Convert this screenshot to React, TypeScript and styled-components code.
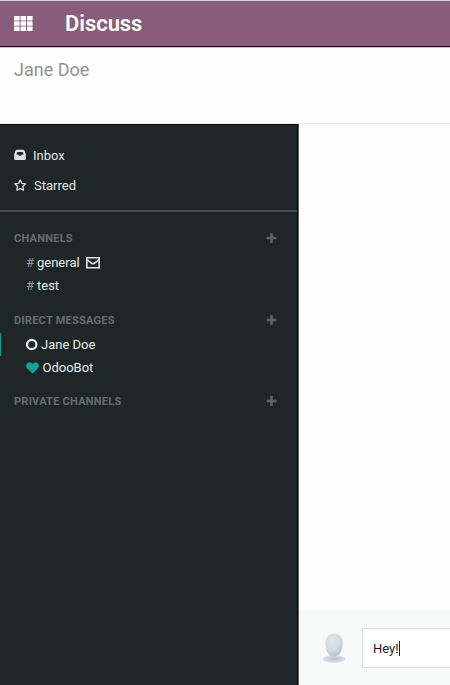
import React from 'react';
import styled, { createGlobalStyle } from 'styled-components';

const GlobalStyle = createGlobalStyle`
  * { box-sizing: border-box; }
  body { margin: 0; background: #fff; font-family: Roboto, "Liberation Sans", sans-serif; font-size: 13px; }
`;

const Page = styled.div`
  display: flex;
  flex-direction: column;
  width: 450px;
  height: 685px;
  overflow: hidden;
  background: #fefefe;
`;

const Navbar = styled.header`
  display: flex;
  align-items: center;
  flex: 0 0 48px;
  padding-left: 14px;
  background: #885d7a;
  border-top: 1px solid #d3d0d2;
  border-bottom: 1px solid #e3b1d8;
  box-shadow: inset 0 -1px #1e0718;
`;

const Brand = styled.h1`
  margin: 0 0 0 32px;
  color: #fff;
  font-size: 22px;
  font-weight: 600;
  line-height: 26px;
  letter-spacing: -0.05px;
`;

const ControlPanel = styled.div`
  flex: 0 0 76px;
  padding: 11px 14px;
  border-bottom: 1px solid #ececec;
  color: #929292;
  font-size: 18px;
  line-height: 21px;
`;

const Body = styled.div`
  display: flex;
  flex: 1;
  min-height: 0;
`;

const Sidebar = styled.aside`
  flex: 0 0 299px;
  background: #1f2628;
  border-top: 1px solid #080b0c;
  border-right: 1px solid #606364;
  box-shadow: inset -1px 0 #030505;
`;

const Mailboxes = styled.nav`
  height: 87px;
  padding-top: 15px;
  border-bottom: 2px solid #484d4f;
  margin-right: 1px;
`;

const Mailbox = styled.div`
  display: flex;
  align-items: center;
  gap: 7px;
  height: 30px;
  padding-left: 14px;
  color: #e2e5e6;
`;

const Section = styled.section<{ $top: number }>`
  padding-top: ${p => p.$top}px;
`;

const SectionHeader = styled.div`
  display: flex;
  align-items: center;
  justify-content: space-between;
  height: 16px;
  margin-bottom: 5px;
  padding: 0 21px 0 14px;
`;

const SectionTitle = styled.h2`
  margin: 0;
  padding-top: 1px;
  color: #686d70;
  font-size: 11px;
  font-weight: 700;
  line-height: 16px;
  letter-spacing: 0.25px;
`;

const Channel = styled.div<{ $active?: boolean }>`
  display: flex;
  align-items: center;
  height: 23px;
  padding-left: 25px;
  border-left: 1px solid ${p => (p.$active ? '#169c91' : 'transparent')};
  color: #e8ebec;
`;

const Hash = styled.span`
  width: 11px;
  color: #92979a;
`;

const ChannelName = styled.span<{ $left?: number }>`
  margin-left: ${p => p.$left || 0}px;
`;

const Unread = styled.span`
  display: flex;
  margin-left: 6px;
`;

const Thread = styled.main`
  display: flex;
  flex: 1;
  flex-direction: column;
  min-width: 0;
`;

const Messages = styled.div`
  flex: 1;
`;

const Composer = styled.div`
  display: flex;
  flex: 0 0 75px;
  padding: 18px 0 0 21px;
  background: #f8faf9;
`;

const Avatar = styled.div`
  width: 30px;
  height: 38px;
  margin-right: 12px;
`;

const Input = styled.div`
  display: flex;
  align-items: center;
  flex: 1;
  height: 40px;
  padding-left: 10px;
  border: 1px solid #dddfe0;
  border-right: 0;
  background: #fff;
  color: #252020;
`;

const Caret = styled.span`
  width: 1px;
  height: 15px;
  background: #222;
`;

const AppsIcon = () => (
  <svg width="19" height="16" viewBox="0 0 19 16" fill="#fff">
    {[0, 5.3, 10.6].map(y =>
      [0, 6.5, 13].map(x => <rect key={`${x}-${y}`} x={x} y={y} width="5.6" height="4.5" rx=".5" />)
    )}
  </svg>
);

const InboxIcon = () => (
  <svg width="12" height="12" viewBox="0 0 12 12">
    <path fill="#dee1e3" fillRule="evenodd" d="M3 .8h6q1.2 0 1.6 1.2L11.8 5v5.1q0 .8-.8.8H1q-.8 0-.8-.8V5L1.4 2Q1.8.8 3 .8ZM3.4 3 2.3 5.4h1.9L5 6.8h2l.8-1.4h1.9L8.6 3Z" />
  </svg>
);

const StarIcon = () => (
  <svg width="13" height="13" viewBox="0 0 13 13" fill="none" stroke="#dee1e3" strokeWidth="1.3" strokeLinejoin="round">
    <path d="m6.2 1 1.6 3.3 3.8.5-2.8 2.6.7 3.9-3.3-1.8-3.3 1.8.7-3.9L.8 4.8l3.8-.5Z" />
  </svg>
);

const PlusIcon = () => (
  <svg width="11" height="11" viewBox="0 0 11 11" fill="#5d6265">
    <path d="M4.2 0h2.6v3.7h3.7v2.6H6.8V10H4.2V6.3H.5V3.7h3.7Z" />
  </svg>
);

const EnvelopeIcon = () => (
  <svg width="14" height="12" viewBox="0 0 14 12" fill="none" stroke="#e2e5e6" strokeWidth="1.6">
    <path d="M.8 .8h12.4v9.9H.8Z" />
    <path d="m1.3 2.9 4.4 3.4q1.3.8 2.6 0l4.4-3.4" />
  </svg>
);

const OfflineIcon = () => (
  <svg width="12" height="13" viewBox="0 0 12 13" fill="none" stroke="#e8ebec" strokeWidth="2.2">
    <circle cx="5.7" cy="6.5" r="4.7" />
  </svg>
);

const HeartIcon = () => (
  <svg width="13" height="12" viewBox="0 0 13 12" fill="#12a195">
    <path d="M6.5 11.6 1.1 6.4C-.9 4.2.2.6 3.2.6c1.5 0 2.5.6 3.3 1.4C7.3 1.2 8.3.6 9.8.6c3 0 4.1 3.6 2.1 5.8Z" />
  </svg>
);

const AvatarIcon = () => (
  <svg width="30" height="38" viewBox="0 0 30 38">
    <defs>
      <radialGradient id="head" cx=".4" cy=".3" r=".75">
        <stop offset="0" stopColor="#e3e6ed" />
        <stop offset=".6" stopColor="#d2d7e0" />
        <stop offset="1" stopColor="#b4bcc9" />
      </radialGradient>
      <radialGradient id="base">
        <stop offset="0" stopColor="#b3bdc9" />
        <stop offset=".6" stopColor="#ccd4de" />
        <stop offset="1" stopColor="#e0e5ec" />
      </radialGradient>
    </defs>
    <ellipse cx="14" cy="31" rx="11.3" ry="3.9" fill="url(#base)" />
    <path d="M14 5.5c5 0 8.6 3.6 8.6 9.4 0 8-3.4 13.6-8.6 13.6s-8.6-5.6-8.6-13.6c0-5.8 3.6-9.4 8.6-9.4Z" fill="url(#head)" />
  </svg>
);

const SectionHeading = ({ title }: { title: string }) => (
  <SectionHeader>
    <SectionTitle>{title}</SectionTitle>
    <PlusIcon />
  </SectionHeader>
);

export default function App() {
  return (
    <Page>
      <GlobalStyle />
      <Navbar>
        <AppsIcon />
        <Brand>Discuss</Brand>
      </Navbar>
      <ControlPanel>Jane Doe</ControlPanel>
      <Body>
        <Sidebar>
          <Mailboxes>
            <Mailbox><InboxIcon /><span>Inbox</span></Mailbox>
            <Mailbox><StarIcon /><span>Starred</span></Mailbox>
          </Mailboxes>
          <Section $top={18}>
            <SectionHeading title="CHANNELS" />
            <Channel>
              <Hash>#</Hash>
              <ChannelName>general</ChannelName>
              <Unread><EnvelopeIcon /></Unread>
            </Channel>
            <Channel><Hash>#</Hash><ChannelName>test</ChannelName></Channel>
          </Section>
          <Section $top={15}>
            <SectionHeading title="DIRECT MESSAGES" />
            <Channel $active><OfflineIcon /><ChannelName $left={3}>Jane Doe</ChannelName></Channel>
            <Channel><HeartIcon /><ChannelName $left={3.5}>OdooBot</ChannelName></Channel>
          </Section>
          <Section $top={14}>
            <SectionHeading title="PRIVATE CHANNELS" />
          </Section>
        </Sidebar>
        <Thread>
          <Messages />
          <Composer>
            <Avatar><AvatarIcon /></Avatar>
            <Input>Hey!<Caret /></Input>
          </Composer>
        </Thread>
      </Body>
    </Page>
  );
}
